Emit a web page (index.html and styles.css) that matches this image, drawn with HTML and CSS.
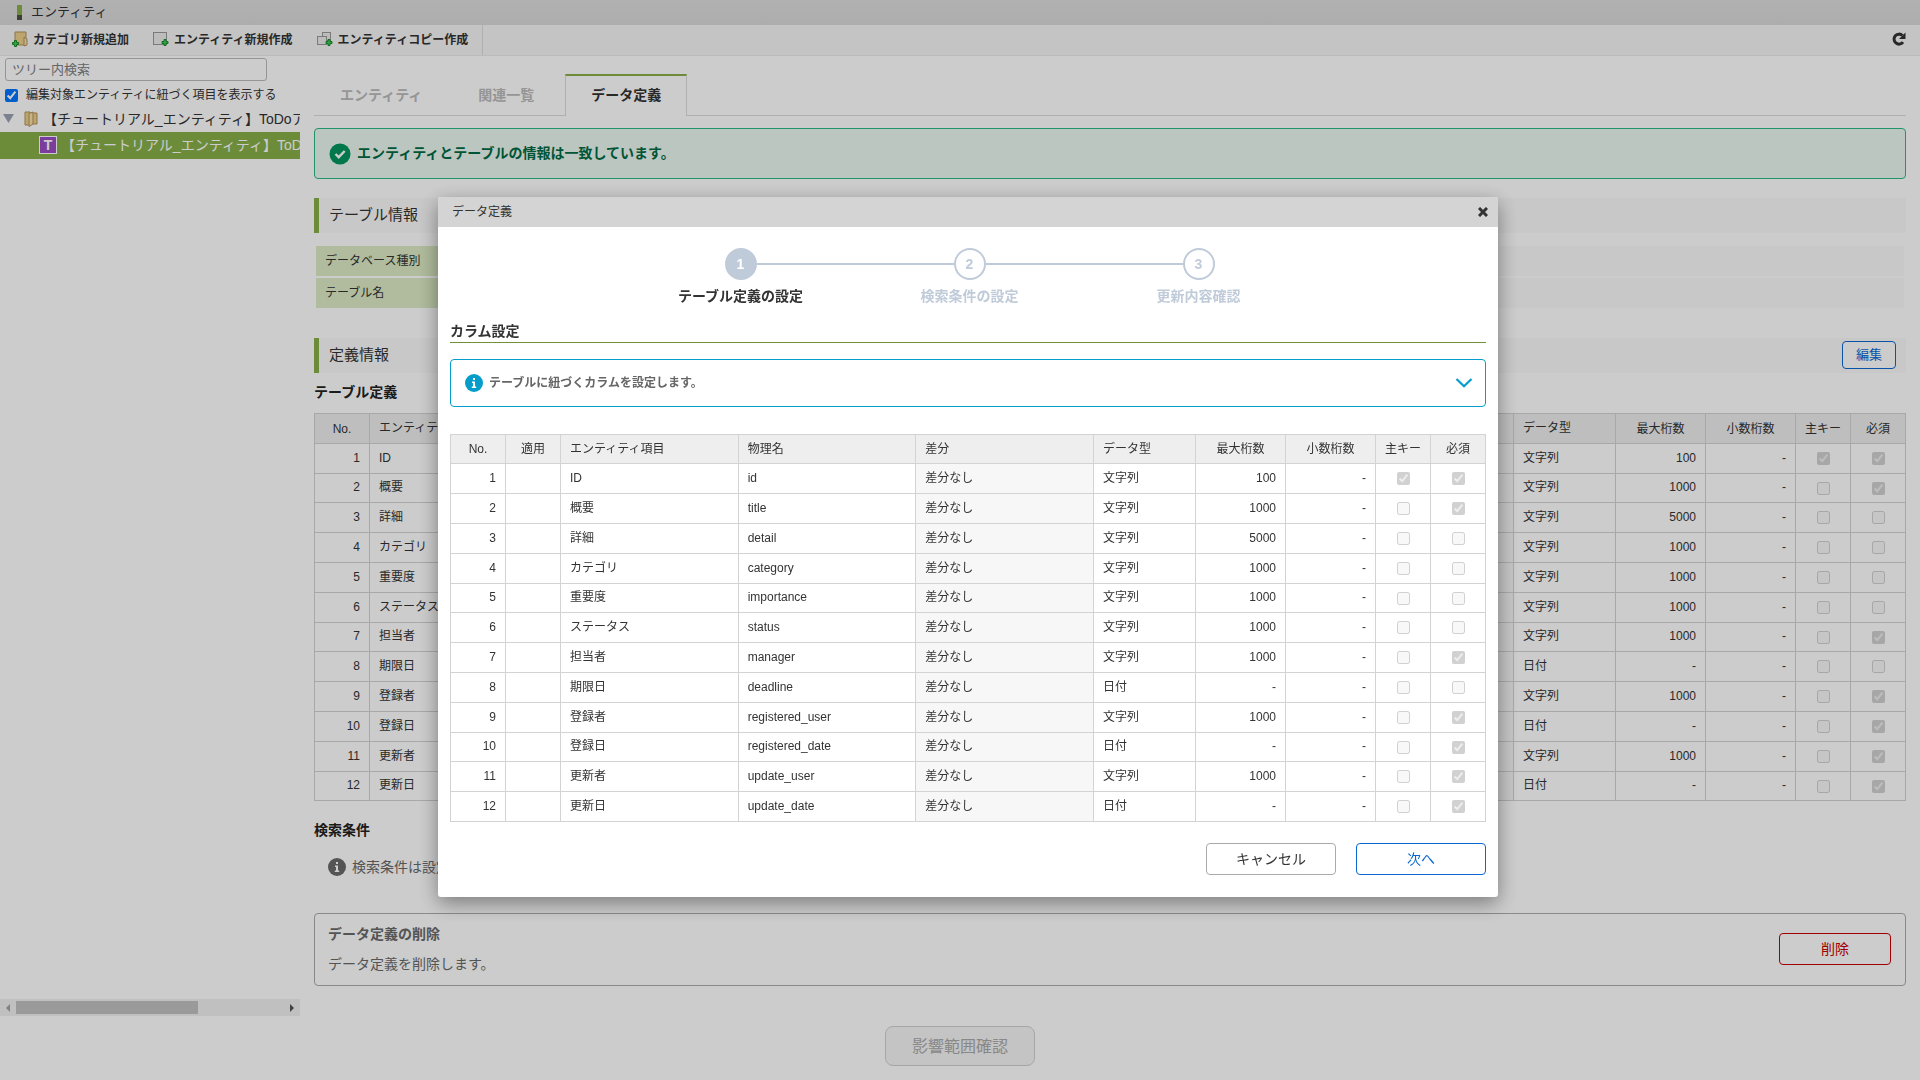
FILE: index.html
```html
<!DOCTYPE html>
<html lang="ja">
<head>
<meta charset="utf-8">
<title>エンティティ</title>
<link rel="stylesheet" href="styles.css">
</head>
<body>
<div class="app">
  <header class="titlebar"><span class="titlebar-mark"></span><h1>エンティティ</h1></header>
  <nav class="toolbar">
    <div class="toolbar-group">
      <button class="tool" type="button">
        <svg width="16" height="16" viewBox="0 0 16 16"><path d="M3 1h11v13H5l-2-1z" fill="#ecd089" stroke="#b3905a"/><path d="M12 6l3 2v6l-3 1z" fill="#f6e2a8" stroke="#b3905a"/><path d="M2.500 9.500h2v2h2v2h-2v2h-2v-2h-2v-2h2z" fill="#3fd053" stroke="#168a2a"/></svg>
        カテゴリ新規追加</button>
      <button class="tool" type="button">
        <svg width="16" height="16" viewBox="0 0 16 16"><rect x=".5" y="1.500" width="13" height="12" fill="#ececec" stroke="#999"/><path d="M11 8.500h2v2h2v2h-2v2h-2v-2H9v-2h2z" fill="#3fd053" stroke="#168a2a"/></svg>
        エンティティ新規作成</button>
      <button class="tool" type="button">
        <svg width="16" height="16" viewBox="0 0 16 16"><rect x="5.500" y="1.500" width="8" height="8" fill="#ececec" stroke="#999"/><rect x=".5" y="5.500" width="9" height="8" fill="#ececec" stroke="#999"/><path d="M11 8.500h2v2h2v2h-2v2h-2v-2H9v-2h2z" fill="#3fd053" stroke="#168a2a"/></svg>
        エンティティコピー作成</button>
    </div>
    <button class="reload" type="button" aria-label="再読み込み">
      <svg width="14" height="14" viewBox="0 0 14 14"><path d="M11 10.200a5 5 0 1 1-.5-6.700" fill="none" stroke="#333" stroke-width="3"/><path d="M13.500.5v6.500H7z" fill="#333"/></svg>
    </button>
  </nav>

  <div class="panes">
    <aside class="sidebar">
      <input class="search" type="text" placeholder="ツリー内検索" aria-label="ツリー内検索">
      <label class="filter"><input type="checkbox" checked> 編集対象エンティティに紐づく項目を表示する</label>
      <div class="tree">
        <div class="node">
          <svg class="caret" width="12" height="10" viewBox="0 0 12 10"><path d="M0 0h11L5.500 9z" fill="#9da3b4"/></svg>
          <svg width="14" height="16" viewBox="0 0 14 16"><path d="M1 1h5v13H1zM8 2h5v11H8z" fill="#ecd089" stroke="#b3905a"/><path d="M5 2.500L9 1v12l-4 2.500z" fill="#f6e2a8" stroke="#b3905a"/></svg>
          <span>【チュートリアル_エンティティ】ToDoアプリ</span>
        </div>
        <div class="node selected"><span class="badge">T</span><span>【チュートリアル_エンティティ】ToDoアプリ</span></div>
      </div>
      <div class="scrollbar">
        <svg width="16" height="16" viewBox="0 0 16 16"><path d="M10 4v8L6 8z" fill="#a3a3a3"/></svg>
        <div class="track"><div class="thumb"></div></div>
        <svg width="16" height="16" viewBox="0 0 16 16"><path d="M6 4v8l4-4z" fill="#505050"/></svg>
      </div>
    </aside>

    <main class="content">
      <div class="tabs">
        <a class="tab" href="#entity">エンティティ</a>
        <a class="tab" href="#relations">関連一覧</a>
        <a class="tab active" href="#data">データ定義</a>
      </div>
      <div class="alert">
        <svg width="22" height="22" viewBox="0 0 22 22"><circle cx="11" cy="11" r="10.500" fill="#00965f"/><path d="M6.500 11l3.200 3.200 6-6.200" fill="none" stroke="#fff" stroke-width="2.400"/></svg>
        <span>エンティティとテーブルの情報は一致しています。</span>
      </div>
      <div class="section"><h2>テーブル情報</h2></div>
      <dl class="info">
        <dt>データベース種別</dt><dd></dd>
        <dt>テーブル名</dt><dd></dd>
      </dl>
      <div class="section"><h2>定義情報</h2><button class="btn small primary" type="button">編集</button></div>
      <h3 class="subhead">テーブル定義</h3>
      <table class="grid main-grid">
        <colgroup><col class="c-no"><col><col><col><col class="c-type"><col class="c-num"><col class="c-num"><col class="c-check"><col class="c-check"></colgroup>
        <thead><tr><th class="mid">No.</th><th>エンティティ項目</th><th></th><th></th><th>データ型</th><th class="mid">最大桁数</th><th class="mid">小数桁数</th><th class="mid">主キー</th><th class="mid">必須</th></tr></thead>
        <tbody>
          <tr><td class="num">1</td><td>ID</td><td></td><td class="diff"></td><td>文字列</td><td class="num">100</td><td class="num">-</td><td class="mid"><input type="checkbox" disabled checked aria-label="主キー"></td><td class="mid"><input type="checkbox" disabled checked aria-label="必須"></td></tr>
          <tr><td class="num">2</td><td>概要</td><td></td><td class="diff"></td><td>文字列</td><td class="num">1000</td><td class="num">-</td><td class="mid"><input type="checkbox" disabled aria-label="主キー"></td><td class="mid"><input type="checkbox" disabled checked aria-label="必須"></td></tr>
          <tr><td class="num">3</td><td>詳細</td><td></td><td class="diff"></td><td>文字列</td><td class="num">5000</td><td class="num">-</td><td class="mid"><input type="checkbox" disabled aria-label="主キー"></td><td class="mid"><input type="checkbox" disabled aria-label="必須"></td></tr>
          <tr><td class="num">4</td><td>カテゴリ</td><td></td><td class="diff"></td><td>文字列</td><td class="num">1000</td><td class="num">-</td><td class="mid"><input type="checkbox" disabled aria-label="主キー"></td><td class="mid"><input type="checkbox" disabled aria-label="必須"></td></tr>
          <tr><td class="num">5</td><td>重要度</td><td></td><td class="diff"></td><td>文字列</td><td class="num">1000</td><td class="num">-</td><td class="mid"><input type="checkbox" disabled aria-label="主キー"></td><td class="mid"><input type="checkbox" disabled aria-label="必須"></td></tr>
          <tr><td class="num">6</td><td>ステータス</td><td></td><td class="diff"></td><td>文字列</td><td class="num">1000</td><td class="num">-</td><td class="mid"><input type="checkbox" disabled aria-label="主キー"></td><td class="mid"><input type="checkbox" disabled aria-label="必須"></td></tr>
          <tr><td class="num">7</td><td>担当者</td><td></td><td class="diff"></td><td>文字列</td><td class="num">1000</td><td class="num">-</td><td class="mid"><input type="checkbox" disabled aria-label="主キー"></td><td class="mid"><input type="checkbox" disabled checked aria-label="必須"></td></tr>
          <tr><td class="num">8</td><td>期限日</td><td></td><td class="diff"></td><td>日付</td><td class="num">-</td><td class="num">-</td><td class="mid"><input type="checkbox" disabled aria-label="主キー"></td><td class="mid"><input type="checkbox" disabled aria-label="必須"></td></tr>
          <tr><td class="num">9</td><td>登録者</td><td></td><td class="diff"></td><td>文字列</td><td class="num">1000</td><td class="num">-</td><td class="mid"><input type="checkbox" disabled aria-label="主キー"></td><td class="mid"><input type="checkbox" disabled checked aria-label="必須"></td></tr>
          <tr><td class="num">10</td><td>登録日</td><td></td><td class="diff"></td><td>日付</td><td class="num">-</td><td class="num">-</td><td class="mid"><input type="checkbox" disabled aria-label="主キー"></td><td class="mid"><input type="checkbox" disabled checked aria-label="必須"></td></tr>
          <tr><td class="num">11</td><td>更新者</td><td></td><td class="diff"></td><td>文字列</td><td class="num">1000</td><td class="num">-</td><td class="mid"><input type="checkbox" disabled aria-label="主キー"></td><td class="mid"><input type="checkbox" disabled checked aria-label="必須"></td></tr>
          <tr><td class="num">12</td><td>更新日</td><td></td><td class="diff"></td><td>日付</td><td class="num">-</td><td class="num">-</td><td class="mid"><input type="checkbox" disabled aria-label="主キー"></td><td class="mid"><input type="checkbox" disabled checked aria-label="必須"></td></tr>
        </tbody>
      </table>
      <h3 class="subhead">検索条件</h3>
      <p class="empty">
        <svg width="18" height="18" viewBox="0 0 18 18"><circle cx="9" cy="9" r="9" fill="#6a6a6a"/><path d="M7 7.500h3v5h1.200V14H6.800v-1.500H8V9H7zM8 4h2v2H8z" fill="#fff"/></svg>
        検索条件は設定されていません。
      </p>
      <div class="danger">
        <div><h3>データ定義の削除</h3><p>データ定義を削除します。</p></div>
        <button class="btn delete" type="button">削除</button>
      </div>
    </main>
  </div>
  <footer class="footer"><button class="impact" type="button">影響範囲確認</button></footer>
</div>

<div class="overlay">
  <section class="modal" role="dialog" aria-labelledby="dialog-title">
    <header class="modal-head">
      <h2 id="dialog-title">データ定義</h2>
      <button class="close" type="button" aria-label="閉じる"><svg width="10" height="10" viewBox="0 0 10 10"><path d="M1 1l8 8M9 1L1 9" stroke="#333" stroke-width="3"/></svg></button>
    </header>
    <div class="modal-body">
      <ol class="steps">
        <li class="step current"><span class="dot">1</span><span>テーブル定義の設定</span></li>
        <li class="step"><span class="dot">2</span><span>検索条件の設定</span></li>
        <li class="step"><span class="dot">3</span><span>更新内容確認</span></li>
      </ol>
      <h3 class="modal-subhead">カラム設定</h3>
      <div class="hint">
        <svg width="18" height="18" viewBox="0 0 18 18"><circle cx="9" cy="9" r="9" fill="#069dcb"/><path d="M7 7.500h3v5h1.200V14H6.800v-1.500H8V9H7zM8 4h2v2H8z" fill="#fff"/></svg>
        <span>テーブルに紐づくカラムを設定します。</span>
        <button class="expand" type="button" aria-label="開く"><svg width="18" height="10" viewBox="0 0 18 10"><path d="M1.500 1L9 8.200 16.500 1" fill="none" stroke="#069dcb" stroke-width="2.200"/></svg></button>
      </div>
      <table class="grid modal-grid">
        <colgroup><col class="c-no"><col class="c-check"><col><col><col><col class="c-type"><col class="c-num"><col class="c-num"><col class="c-check"><col class="c-check"></colgroup>
        <thead><tr><th class="mid">No.</th><th class="mid">適用</th><th>エンティティ項目</th><th>物理名</th><th>差分</th><th>データ型</th><th class="mid">最大桁数</th><th class="mid">小数桁数</th><th class="mid">主キー</th><th class="mid">必須</th></tr></thead>
        <tbody>
          <tr><td class="num">1</td><td></td><td>ID</td><td>id</td><td class="diff">差分なし</td><td>文字列</td><td class="num">100</td><td class="num">-</td><td class="mid"><input type="checkbox" disabled checked aria-label="主キー"></td><td class="mid"><input type="checkbox" disabled checked aria-label="必須"></td></tr>
          <tr><td class="num">2</td><td></td><td>概要</td><td>title</td><td class="diff">差分なし</td><td>文字列</td><td class="num">1000</td><td class="num">-</td><td class="mid"><input type="checkbox" disabled aria-label="主キー"></td><td class="mid"><input type="checkbox" disabled checked aria-label="必須"></td></tr>
          <tr><td class="num">3</td><td></td><td>詳細</td><td>detail</td><td class="diff">差分なし</td><td>文字列</td><td class="num">5000</td><td class="num">-</td><td class="mid"><input type="checkbox" disabled aria-label="主キー"></td><td class="mid"><input type="checkbox" disabled aria-label="必須"></td></tr>
          <tr><td class="num">4</td><td></td><td>カテゴリ</td><td>category</td><td class="diff">差分なし</td><td>文字列</td><td class="num">1000</td><td class="num">-</td><td class="mid"><input type="checkbox" disabled aria-label="主キー"></td><td class="mid"><input type="checkbox" disabled aria-label="必須"></td></tr>
          <tr><td class="num">5</td><td></td><td>重要度</td><td>importance</td><td class="diff">差分なし</td><td>文字列</td><td class="num">1000</td><td class="num">-</td><td class="mid"><input type="checkbox" disabled aria-label="主キー"></td><td class="mid"><input type="checkbox" disabled aria-label="必須"></td></tr>
          <tr><td class="num">6</td><td></td><td>ステータス</td><td>status</td><td class="diff">差分なし</td><td>文字列</td><td class="num">1000</td><td class="num">-</td><td class="mid"><input type="checkbox" disabled aria-label="主キー"></td><td class="mid"><input type="checkbox" disabled aria-label="必須"></td></tr>
          <tr><td class="num">7</td><td></td><td>担当者</td><td>manager</td><td class="diff">差分なし</td><td>文字列</td><td class="num">1000</td><td class="num">-</td><td class="mid"><input type="checkbox" disabled aria-label="主キー"></td><td class="mid"><input type="checkbox" disabled checked aria-label="必須"></td></tr>
          <tr><td class="num">8</td><td></td><td>期限日</td><td>deadline</td><td class="diff">差分なし</td><td>日付</td><td class="num">-</td><td class="num">-</td><td class="mid"><input type="checkbox" disabled aria-label="主キー"></td><td class="mid"><input type="checkbox" disabled aria-label="必須"></td></tr>
          <tr><td class="num">9</td><td></td><td>登録者</td><td>registered_user</td><td class="diff">差分なし</td><td>文字列</td><td class="num">1000</td><td class="num">-</td><td class="mid"><input type="checkbox" disabled aria-label="主キー"></td><td class="mid"><input type="checkbox" disabled checked aria-label="必須"></td></tr>
          <tr><td class="num">10</td><td></td><td>登録日</td><td>registered_date</td><td class="diff">差分なし</td><td>日付</td><td class="num">-</td><td class="num">-</td><td class="mid"><input type="checkbox" disabled aria-label="主キー"></td><td class="mid"><input type="checkbox" disabled checked aria-label="必須"></td></tr>
          <tr><td class="num">11</td><td></td><td>更新者</td><td>update_user</td><td class="diff">差分なし</td><td>文字列</td><td class="num">1000</td><td class="num">-</td><td class="mid"><input type="checkbox" disabled aria-label="主キー"></td><td class="mid"><input type="checkbox" disabled checked aria-label="必須"></td></tr>
          <tr><td class="num">12</td><td></td><td>更新日</td><td>update_date</td><td class="diff">差分なし</td><td>日付</td><td class="num">-</td><td class="num">-</td><td class="mid"><input type="checkbox" disabled aria-label="主キー"></td><td class="mid"><input type="checkbox" disabled checked aria-label="必須"></td></tr>
        </tbody>
      </table>
      <div class="actions">
        <button class="btn wide" type="button">キャンセル</button>
        <button class="btn wide primary" type="button">次へ</button>
      </div>
    </div>
  </section>
</div>
</body>
</html>
```

FILE: styles.css
```css
* { box-sizing: border-box; }

body {
  margin: 0;
  background: #fff;
  color: #333;
  font: 12px/18px "Liberation Sans", "Noto Sans CJK JP", sans-serif;
}

h1, h2, h3, p, dl, dd, ol { margin: 0; padding: 0; }
button, input { font-family: inherit; color: inherit; }
button { cursor: pointer; }
svg { flex: none; display: block; }

.app { display: flex; flex-direction: column; min-height: 100vh; }

/* Title bar and toolbar */
.titlebar {
  display: flex;
  align-items: center;
  height: 25px;
  padding-left: 17px;
  gap: 9px;
  background: linear-gradient(#dedede, #d9d9d9);
}
.titlebar-mark { width: 5px; height: 15px; background: linear-gradient(#87af48 67%, #4c5142 67%); }
.titlebar h1 { padding-bottom: 2px; font-size: 13px; font-weight: 400; }

.toolbar {
  display: flex;
  justify-content: space-between;
  height: 31px;
  background: #f5f5f5;
  border-bottom: 1px solid #eaeaea;
}
.toolbar-group { display: flex; gap: 24px; padding: 0 14px 0 12px; border-right: 1px solid #ddd; }
.tool {
  display: flex;
  align-items: center;
  gap: 5px;
  padding: 0 0 3px;
  border: 0;
  background: none;
  font-size: 12px;
  font-weight: 700;
}
.reload { padding: 0 14px 3px 0; border: 0; background: none; }

/* Side tree */
.panes { display: flex; flex: 1; }
.sidebar { display: flex; flex-direction: column; flex: none; width: 300px; padding-top: 2px; }
.search {
  width: 262px;
  height: 23px;
  margin-left: 5px;
  padding: 0 6px;
  border: 1px solid #bbb;
  border-radius: 3px;
  font-size: 13px;
}
.search::placeholder { color: #808080; }
.filter { display: flex; align-items: center; gap: 8px; height: 28px; padding-left: 5px; }
input[type="checkbox"] { width: 13px; height: 13px; margin: 0; }
.tree { flex: 1; overflow: hidden; }
.node {
  display: flex;
  align-items: center;
  gap: 5px;
  height: 23px;
  padding: 0 0 4px 3px;
  font-size: 14px;
  line-height: 20px;
  white-space: nowrap;
}
.caret { margin-right: 4px; }
.node.selected { height: 27px; padding: 0 0 2px 39px; background: #87af48; color: #fff; gap: 4px; }
.badge {
  flex: none;
  width: 18px;
  height: 18px;
  border: 1px solid #fff;
  background: #9a4cc4;
  font-weight: 700;
  line-height: 16px;
  text-align: center;
}
.scrollbar { display: flex; height: 17px; align-items: center; background: #f1f1f1; }
.track { flex: 1; }
.thumb { width: 68%; height: 13px; background: #c1c1c1; }

/* Main column */
.content { flex: 1; padding: 18px 14px 0; }
.tabs { display: flex; height: 42px; border-bottom: 1px solid #dcdcdc; }
.tab {
  height: 42px;
  padding: 2px 27px 0 25px;
  border: 1px solid transparent;
  border-top-width: 2px;
  border-bottom: 0;
  color: #bbb;
  font-size: 14px;
  font-weight: 700;
  line-height: 34px;
  text-decoration: none;
}
.tab + .tab { margin-left: 2px; }
.tab.active { border-color: #87af48 #dcdcdc; background: #fff; color: #333; padding: 2px 25px 0; margin-left: 3px; }
.alert {
  display: flex;
  align-items: center;
  gap: 6px;
  height: 51px;
  margin-top: 12px;
  padding: 0 14px;
  border: 1px solid #2bba85;
  border-radius: 4px;
  background: #ecf8f1;
  color: #006b45;
  font-size: 14px;
  font-weight: 700;
}
.alert span { padding-bottom: 2px; }
.section {
  display: flex;
  align-items: center;
  justify-content: space-between;
  height: 35px;
  margin-top: 19px;
  padding: 0 10px 2px;
  border-left: 5px solid #87af48;
  background: #fafafa;
}
.section h2 { font-size: 15px; font-weight: 400; }
.info {
  display: grid;
  grid-template-columns: 160px 1fr;
  grid-auto-rows: 30px;
  row-gap: 2px;
  margin: 13px 2px 30px;
  line-height: 30px;
}
.info dt { padding-left: 9px; background: #dcebc5; }
.info dd { background: #fafafa; }
.subhead { height: 40px; color: #222; font-size: 14px; line-height: 38px; }

.grid { width: 100%; border-collapse: collapse; table-layout: fixed; }
.grid th, .grid td {
  height: 30px;
  padding: 0 9px 2px;
  border: 1px solid #d3d3d3;
  line-height: 18px;
  text-align: left;
}
.grid th { padding-bottom: 1px; background: #eee; font-weight: 400; }
.grid .num { text-align: right; }
.grid .mid { padding: 0; text-align: center; }
.grid .diff { background: #f7f7f7; }
.grid td input { display: block; margin: 0 auto; }
.main-grid tbody tr:nth-child(5n+2) td { height: 29px; }
.modal-grid thead th, .modal-grid tbody tr:nth-child(5n) td { height: 29px; }
.c-no, .c-check { width: 55px; }
.c-type { width: 102px; }
.c-num { width: 90px; }

.content .grid + .subhead { margin-top: 10px; }
.empty { display: flex; align-items: center; gap: 6px; height: 31px; padding-left: 14px; color: #6a6a6a; font-size: 14px; }
.danger {
  display: flex;
  align-items: center;
  justify-content: space-between;
  height: 73px;
  margin-top: 31px;
  padding: 0 14px 2px 13px;
  border: 1px solid #acacac;
  border-radius: 4px;
  color: #6a6a6a;
  font-size: 14px;
  line-height: 30px;
}
.danger h3 { font-size: 14px; }
.footer { display: flex; justify-content: center; height: 64px; padding-top: 10px; }
.impact {
  width: 150px;
  height: 40px;
  padding: 0 0 2px;
  border: 1px solid #d0d0d0;
  border-radius: 8px;
  background: #f5f5f5;
  color: #aaa;
  font-size: 16px;
}

.btn {
  height: 32px;
  padding: 0 0 2px;
  border: 1px solid #aaa;
  border-radius: 4px;
  background: #fff;
  font-size: 14px;
}
.btn.primary { border-color: #0b67d2; color: #0b67d2; }
.btn.wide { width: 130px; }
.btn.small { width: 54px; height: 28px; font-size: 13px; }
.btn.delete { width: 112px; border-color: #c80000; color: #c80000; }

/* Dialog over the page */
.overlay {
  position: fixed;
  inset: 0;
  display: flex;
  justify-content: center;
  align-items: flex-start;
  padding: 197px 0 0 16px;
  background: rgba(0, 0, 0, 0.2);
}
.modal {
  width: 1060px;
  border-radius: 3px;
  overflow: hidden;
  background: #fff;
  box-shadow: 0 6px 20px rgba(0, 0, 0, 0.4);
}
.modal-head {
  display: flex;
  align-items: center;
  justify-content: space-between;
  height: 30px;
  padding: 0 10px 0 14px;
  background: #d4d4d4;
}
.modal-head h2 { font-size: 12px; font-weight: 400; }
.close { padding: 0; border: 0; background: none; }
.modal-body { padding: 21px 12px 22px; }
.steps { display: flex; justify-content: center; padding-left: 3px; list-style: none; }
.step {
  position: relative;
  display: flex;
  flex-direction: column;
  align-items: center;
  gap: 6px;
  width: 229px;
  color: #c0cbda;
  font-size: 14px;
  font-weight: 700;
  line-height: 20px;
}
.step + .step::before {
  content: "";
  position: absolute;
  top: 15px;
  right: calc(50% + 16px);
  width: calc(100% - 32px);
  height: 2px;
  background: #c0cbda;
}
.dot { width: 32px; height: 32px; border: 2px solid #c0cbda; border-radius: 50%; line-height: 28px; text-align: center; }
.step.current { color: #333; }
.step.current .dot { background: #c0cbda; color: #fff; }
.modal-subhead { height: 37px; padding-top: 15px; border-bottom: 1px solid #6f9137; font-size: 14px; line-height: 20px; }
.hint {
  display: flex;
  align-items: center;
  gap: 6px;
  height: 48px;
  margin: 16px 0 27px;
  padding: 0 12px 0 14px;
  border: 1px solid #069dcb;
  border-radius: 4px;
  color: #666;
  font-weight: 700;
}
.expand { margin-left: auto; padding: 0; border: 0; background: none; }
.actions { display: flex; justify-content: flex-end; gap: 20px; margin-top: 21px; }
```
